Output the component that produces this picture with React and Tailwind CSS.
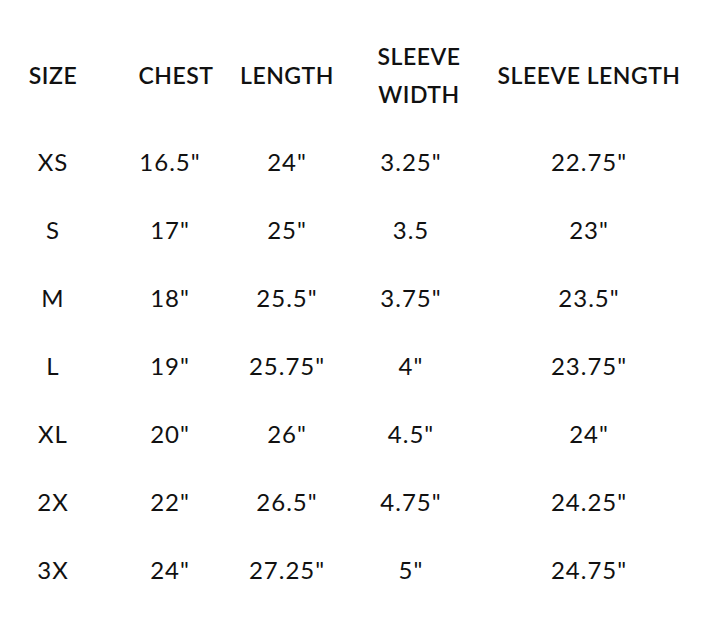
const headers = [
  { label: "SIZE", cls: "" },
  { label: "CHEST", cls: "pl-3" },
  { label: "LENGTH", cls: "" },
  { label: "SLEEVE WIDTH", cls: "pl-4 leading-[38px]", split: true },
  { label: "SLEEVE LENGTH", cls: "" },
];

const rows = [
  ["XS", '16.5"', '24"', '3.25"', '22.75"'],
  ["S", '17"', '25"', "3.5", '23"'],
  ["M", '18"', '25.5"', '3.75"', '23.5"'],
  ["L", '19"', '25.75"', '4"', '23.75"'],
  ["XL", '20"', '26"', '4.5"', '24"'],
  ["2X", '22"', '26.5"', '4.75"', '24.25"'],
  ["3X", '24"', '27.25"', '5"', '24.75"'],
];

const widths = ["w-[106px]", "w-[128px]", "w-[106px]", "w-[142px]", "w-[214px]"];

export default function App() {
  return (
    <div className="w-[720px] h-[624px] bg-white pt-[22px] font-['Lato',sans-serif] text-[#111]">
      <table className="table-fixed border-collapse">
        <thead>
          <tr className="h-[106px]">
            {headers.map((h, i) => (
              <th
                key={h.label}
                className={`${widths[i]} ${h.cls} text-center align-middle text-[23px] font-semibold tracking-[0.5px]`}
              >
                {h.split ? (
                  <>
                    SLEEVE
                    <br />
                    WIDTH
                  </>
                ) : (
                  h.label
                )}
              </th>
            ))}
          </tr>
        </thead>
        <tbody>
          {rows.map((r) => (
            <tr key={r[0]} className="h-[68px]">
              {r.map((c, i) => (
                <td
                  key={i}
                  className="text-center align-middle text-[24px] font-normal tracking-[1px]"
                >
                  {c}
                </td>
              ))}
            </tr>
          ))}
        </tbody>
      </table>
    </div>
  );
}
